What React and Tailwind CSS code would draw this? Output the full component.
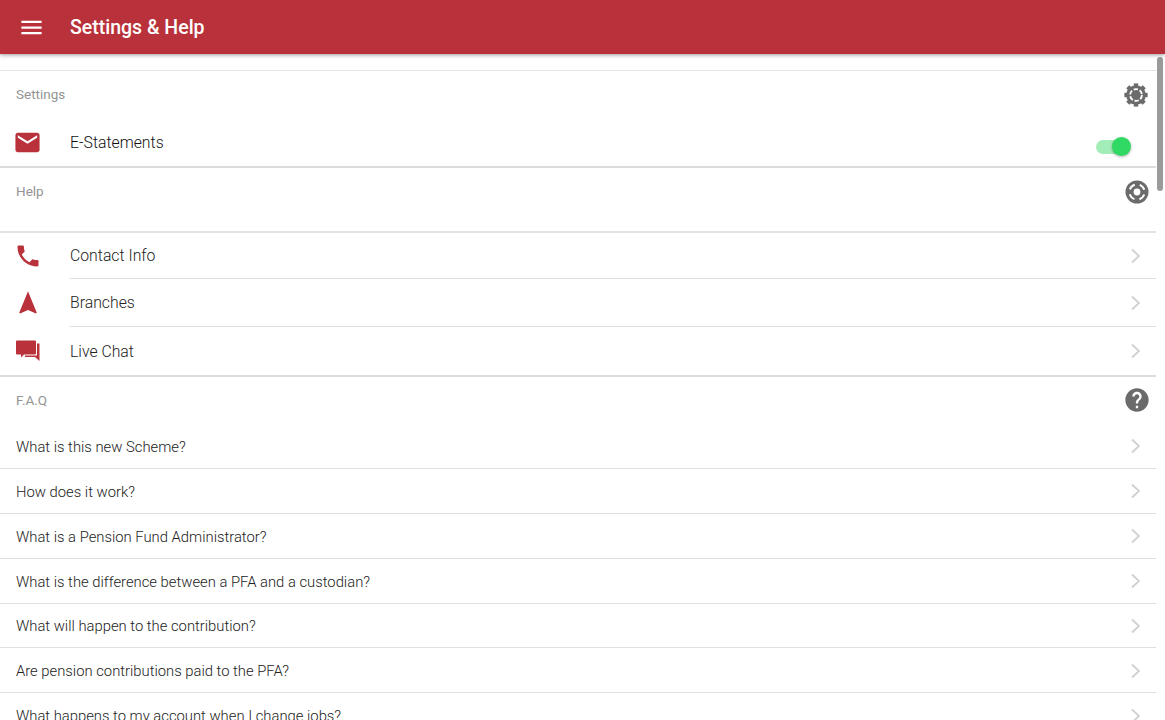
import React from 'react';
import { MdEmail, MdPhone, MdNavigation, MdHelp, MdMenu } from 'react-icons/md';

function ChatIcon({ className }) {
  return (
    <svg className={className} viewBox="-2 -3.5 28 28" fill="currentColor">
      <path d="M1 0 H19 A1 1 0 0 1 20 1 V13 A1 1 0 0 1 19 14 H8 L5 17 V14 H1 A1 1 0 0 1 0 13 V1 A1 1 0 0 1 1 0 Z" />
      <path d="M21 3 H23.5 V20.5 L19 16.5 H9 V15 H21 Z" />
    </svg>
  );
}

const helpRows = [
  { label: 'Contact Info', icon: MdPhone, height: 'h-[46px]' },
  { label: 'Branches', icon: MdNavigation, height: 'h-[48px]' },
  { label: 'Live Chat', icon: ChatIcon, height: 'h-[48px]' },
];

const faqs = [
  'What is this new Scheme?',
  'How does it work?',
  'What is a Pension Fund Administrator?',
  'What is the difference between a PFA and a custodian?',
  'What will happen to the contribution?',
  'Are pension contributions paid to the PFA?',
  'What happens to my account when I change jobs?',
];

function Chevron() {
  return (
    <svg className="w-[10px] h-[16px] text-[#d0d0d0]" viewBox="0 0 10 16" fill="none" stroke="currentColor" strokeWidth="1.8">
      <path d="M2 1.5 L9 8 L2 14.5" />
    </svg>
  );
}

function Gear() {
  const teeth = [0, 45, 90, 135, 180, 225, 270, 315];
  return (
    <svg className="w-[26px] h-[26px] text-[#6b6b6b] -mt-[3px]" viewBox="0 0 26 26" fill="currentColor">
      {teeth.map((a) => (
        <rect key={a} x="10.8" y="1.4" width="4.4" height="5" transform={`rotate(${a} 13 13)`} />
      ))}
      <circle cx="13" cy="13" r="9.8" />
      <circle cx="13" cy="13" r="5.9" fill="none" stroke="#fff" strokeWidth="1.8" strokeDasharray="4.4 1.78" />
    </svg>
  );
}

function Buoy() {
  return (
    <svg className="w-[24px] h-[24px] text-[#6b6b6b] -mt-[2px]" viewBox="0 0 24 24" fill="currentColor">
      <circle cx="12" cy="12" r="11.5" />
      <circle cx="12" cy="12" r="7.6" fill="none" stroke="#fff" strokeWidth="2" strokeDasharray="6.9 5.04" strokeDashoffset="-2.52" />
      <circle cx="12" cy="12" r="3.4" fill="#fff" />
    </svg>
  );
}

function SectionHead({ title, children, className }) {
  return (
    <div className={`flex justify-between ${className}`}>
      <span className="text-[13.5px] leading-[18px] text-[#949494]">{title}</span>
      {children}
    </div>
  );
}

export default function App() {
  return (
    <div className="relative h-screen overflow-hidden bg-white font-['Roboto',sans-serif]">
      <header className="relative z-10 flex items-center h-[54px] bg-[#b9323b] text-white shadow-[0_1px_4px_rgba(0,0,0,0.4)]">
        <MdMenu className="ml-[18px] w-[27px] h-[27px]" />
        <h1 className="ml-[25px] pt-px text-[19.5px] font-medium">Settings &amp; Help</h1>
      </header>

      <main className="w-[1156px] pt-[16px]">
        <section className="border-t border-[#e4e4e4]">
          <SectionHead title="Settings" className="pl-[16px] pr-[7px] pt-[14px] h-[48px]">
            <Gear />
          </SectionHead>
          <div className="flex items-center h-[49px] pl-[15px] border-b-2 border-[#dcdcdc]">
            <MdEmail className="w-[29px] h-[29px] -ml-[2px] text-[#b9323b]" />
            <span className="ml-[28px] text-[15.8px] font-light text-[#111]">E-Statements</span>
            <div className="relative ml-auto mr-[30px] w-[30px] h-[14px] mt-[9px] rounded-full bg-[#a3edb8]">
              <div className="absolute -top-[3px] right-[-5px] w-[19px] h-[19px] rounded-full bg-[#2fd964] shadow-[0_1px_3px_rgba(0,0,0,0.3)]" />
            </div>
          </div>
        </section>

        <section className="border-b-2 border-[#e4e4e4]">
          <SectionHead title="Help" className="pl-[16px] pr-[7px] pt-[14px] h-[63px]">
            <Buoy />
          </SectionHead>
        </section>

        <section className="border-b-2 border-[#dcdcdc]">
          {helpRows.map((row, i) => {
            const Icon = row.icon;
            return (
              <div key={row.label} className={`flex items-center pl-[14px] ${row.height}`}>
                <Icon className="w-[28px] h-[28px] text-[#b9323b] shrink-0" />
                <div className={`flex flex-1 items-center justify-between h-full ml-[28px] pr-[16px] ${i < 2 ? 'border-b border-[#e0e0e0]' : ''}`}>
                  <span className="pt-px text-[15.8px] font-light text-[#222]">{row.label}</span>
                  <Chevron />
                </div>
              </div>
            );
          })}
        </section>

        <section>
          <SectionHead title="F.A.Q" className="pl-[16px] pr-[5px] pt-[14px] h-[47px]">
            <MdHelp className="w-[28px] h-[28px] text-[#6b6b6b] -mt-[5px]" />
          </SectionHead>
          {faqs.map((q) => (
            <div key={q} className="flex items-center justify-between h-[44.9px] pt-px pl-[16px] pr-[16px] border-b border-[#e0e0e0]">
              <span className="pt-px text-[14.8px] font-light text-[#222]">{q}</span>
              <Chevron />
            </div>
          ))}
        </section>
      </main>

      <div className="absolute top-[57px] right-[2px] w-[6px] h-[134px] rounded-full bg-[#9a9a9a]" />
    </div>
  );
}
